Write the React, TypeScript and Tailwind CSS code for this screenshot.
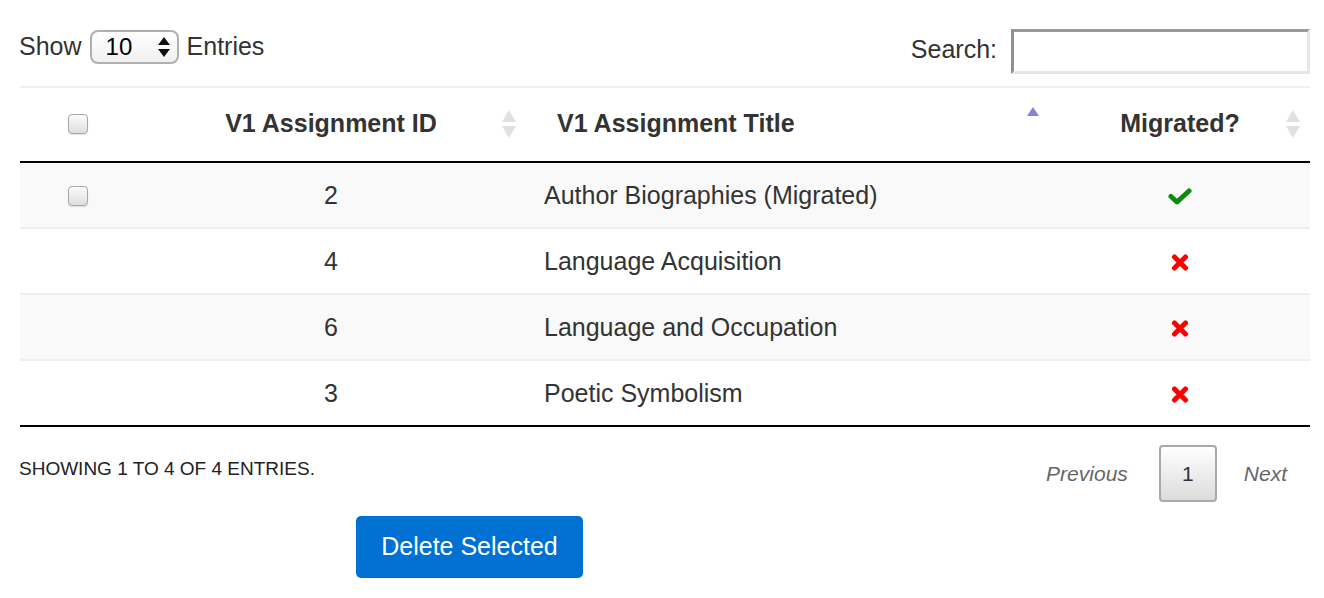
import React from "react";

type Row = { id: number; title: string; migrated: boolean; selectable: boolean };

const ROWS: Row[] = [
  { id: 2, title: "Author Biographies (Migrated)", migrated: true, selectable: true },
  { id: 4, title: "Language Acquisition", migrated: false, selectable: false },
  { id: 6, title: "Language and Occupation", migrated: false, selectable: false },
  { id: 3, title: "Poetic Symbolism", migrated: false, selectable: false },
];

// both arrows grey = unsorted, only the blue up arrow = sorted asc
const SortIcon = ({ asc }: { asc?: boolean }) => (
  <svg width="14" height="28" viewBox="0 0 14 28" className="shrink-0">
    {asc ? (
      <polygon points="7,3 13,12 1,12" fill="#8383dd" />
    ) : (
      <>
        <polygon points="7,0 14,12 0,12" fill="#e0e0e0" />
        <polygon points="0,16 14,16 7,28" fill="#e0e0e0" />
      </>
    )}
  </svg>
);

const Checkbox = () => (
  <div className="mx-auto h-[20px] w-[20px] rounded-[4px] border border-[#a8a8a8] bg-gradient-to-b from-[#fbfbfb] to-[#dedede] shadow-[0_1px_1px_rgba(0,0,0,0.12)]" />
);

const Check = () => (
  <svg width="24" height="17" viewBox="0 0 24 17" className="mx-auto">
    <polyline
      points="3,8.5 9,14 21,3"
      fill="none"
      stroke="#0b8a0b"
      strokeWidth="5"
      strokeLinecap="round"
      strokeLinejoin="round"
    />
  </svg>
);

const Cross = () => (
  <svg width="18" height="17" viewBox="0 0 18 17" className="mx-auto">
    <path
      d="M3.5 3 L14.5 14 M14.5 3 L3.5 14"
      fill="none"
      stroke="#ff0000"
      strokeWidth="5"
      strokeLinecap="round"
    />
  </svg>
);

export default function App() {
  return (
    <div
      className="ml-[20px] w-[1290px] bg-white text-[#333]"
      style={{ fontFamily: '"Liberation Sans", Arial, sans-serif' }}
    >
      {/* top controls */}
      <div className="flex h-[86px] items-start justify-between pt-[29px]">
        <div className="mt-[1px] flex h-[34px] items-center text-[25px]">
          <span className="-ml-[1px]">Show</span>
          <div className="ml-[8px] mr-[8px] flex h-[34px] w-[89px] items-center justify-between rounded-[8px] border-2 border-[#b0b0b0] bg-gradient-to-b from-white to-[#f1f1f1] pl-[14px] pr-[6px]">
            <span className="text-[24px] text-black">10</span>
            <svg width="14" height="22" viewBox="0 0 14 22">
              <polygon points="7,1 13,9 1,9" fill="#111" />
              <polygon points="1,13 13,13 7,21" fill="#111" />
            </svg>
          </div>
          <span>Entries</span>
        </div>
        <div className="flex h-[44px] items-center">
          <span className="mr-[14px] -mt-[2px] text-[25px]">Search:</span>
          <div className="h-[45px] w-[299px] border-[3px] border-b-[#e6e6e6] border-l-[#8f8f8f] border-r-[#e6e6e6] border-t-[#999] bg-white" />
        </div>
      </div>

      {/* table */}
      <table className="w-full table-fixed border-collapse border-t-2 border-[#f0f0f0]">
        <colgroup>
          <col className="w-[116px]" />
          <col className="w-[390px]" />
          <col className="w-[524px]" />
          <col className="w-[260px]" />
        </colgroup>
        <thead>
          <tr className="h-[75px] border-b-2 border-black text-[25px] font-bold">
            <th className="p-0 pb-[2px]">
              <Checkbox />
            </th>
            <th className="p-0 pb-[2px]">
              <div className="flex items-center pl-[24px] pr-[10px]">
                <span className="flex-1 text-center">V1 Assignment ID</span>
                <SortIcon />
              </div>
            </th>
            <th className="p-0 pb-[2px]">
              <div className="flex items-center pl-[31px] pr-[10px]">
                <span className="flex-1 text-left">V1 Assignment Title</span>
                <div className="-mt-[12px]">
                  <SortIcon asc />
                </div>
              </div>
            </th>
            <th className="p-0 pb-[2px]">
              <div className="flex items-center pl-[24px] pr-[10px]">
                <span className="flex-1 text-center">Migrated?</span>
                <SortIcon />
              </div>
            </th>
          </tr>
        </thead>
        <tbody className="text-[25px]">
          {ROWS.map((r, i) => (
            <tr
              key={r.id}
              className={`h-[66px] ${i % 2 === 0 ? "bg-[#f9f9f9]" : "bg-white"} ${
                i < ROWS.length - 1 ? "border-b-2 border-[#efefef]" : "border-b-2 border-black"
              }`}
            >
              <td className="p-0 pt-[2px]">{r.selectable ? <Checkbox /> : null}</td>
              <td className="p-0 pt-[2px] text-center">{r.id}</td>
              <td className="p-0 pl-[18px] pt-[2px]">{r.title}</td>
              <td className="p-0 pt-[2px]">{r.migrated ? <Check /> : <Cross />}</td>
            </tr>
          ))}
        </tbody>
      </table>

      {/* footer */}
      <div className="mt-[18px] flex items-start justify-between">
        <div className="-ml-[1px] pt-[10px] text-[19px] text-[#222]">SHOWING 1 TO 4 OF 4 ENTRIES.</div>
        <div className="flex items-center pr-[23px] text-[21px] italic text-[#666]">
          <span>Previous</span>
          <div className="ml-[31px] mr-[27px] flex h-[57px] w-[58px] items-center justify-center rounded-[4px] border-2 border-[#a9a9a9] bg-gradient-to-b from-white to-[#dcdcdc] not-italic text-[#333]">
            1
          </div>
          <span>Next</span>
        </div>
      </div>

      <button className="ml-[336px] mt-[14px] flex h-[62px] w-[227px] items-center justify-center rounded-[5px] bg-[#0070d2] text-[25px] text-white">
        Delete Selected
      </button>
    </div>
  );
}
